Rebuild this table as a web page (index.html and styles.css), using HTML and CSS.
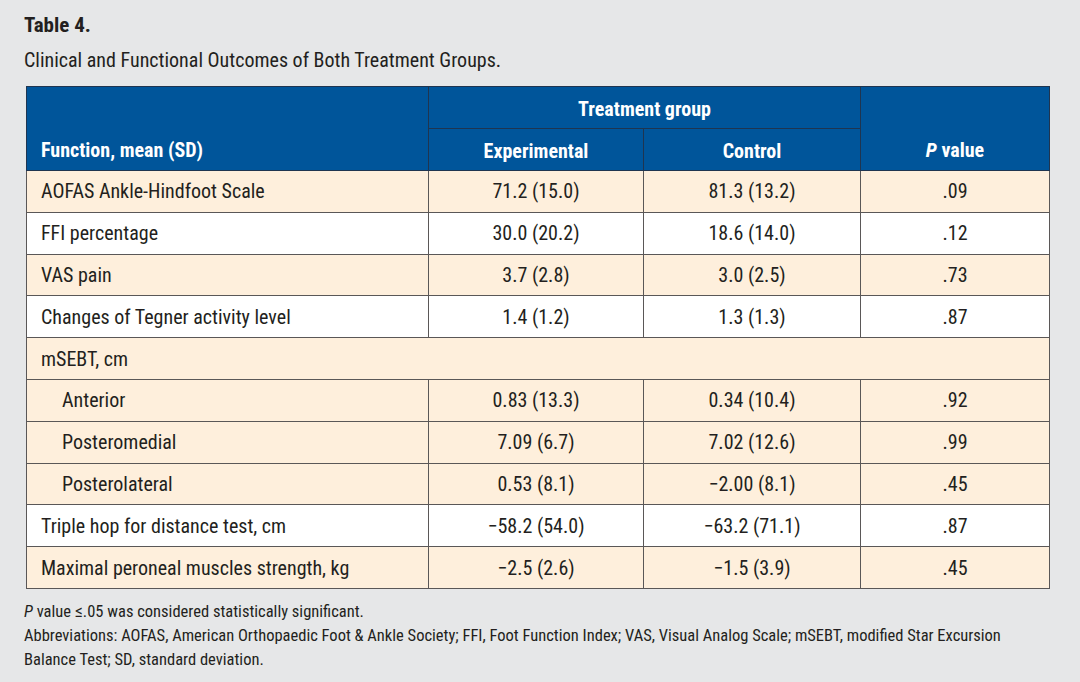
FILE: index.html
```html
<!DOCTYPE html>
<html lang="en">
<head>
<meta charset="utf-8">
<title>Table 4</title>
<link rel="stylesheet" href="styles.css">
</head>
<body>
<div class="page">
  <h1 class="label">Table 4.</h1>
  <p class="caption">Clinical and Functional Outcomes of Both Treatment Groups.</p>
  <table class="data">
    <colgroup>
      <col class="c1"><col class="c2"><col class="c3"><col class="c4">
    </colgroup>
    <thead>
      <tr class="h1">
        <th class="left low" rowspan="2">Function, mean (SD)</th>
        <th colspan="2" class="group">Treatment group</th>
        <th class="low" rowspan="2"><i>P</i> value</th>
      </tr>
      <tr class="h2">
        <th>Experimental</th>
        <th>Control</th>
      </tr>
    </thead>
    <tbody>
      <tr class="cream"><td class="left">AOFAS Ankle-Hindfoot Scale</td><td>71.2 (15.0)</td><td>81.3 (13.2)</td><td>.09</td></tr>
      <tr class="white"><td class="left">FFI percentage</td><td>30.0 (20.2)</td><td>18.6 (14.0)</td><td>.12</td></tr>
      <tr class="cream"><td class="left">VAS pain</td><td>3.7 (2.8)</td><td>3.0 (2.5)</td><td>.73</td></tr>
      <tr class="white"><td class="left">Changes of Tegner activity level</td><td>1.4 (1.2)</td><td>1.3 (1.3)</td><td>.87</td></tr>
      <tr class="cream"><td class="left" colspan="4">mSEBT, cm</td></tr>
      <tr class="cream"><td class="left sub">Anterior</td><td>0.83 (13.3)</td><td>0.34 (10.4)</td><td>.92</td></tr>
      <tr class="cream"><td class="left sub">Posteromedial</td><td>7.09 (6.7)</td><td>7.02 (12.6)</td><td>.99</td></tr>
      <tr class="cream"><td class="left sub">Posterolateral</td><td>0.53 (8.1)</td><td>&minus;2.00 (8.1)</td><td>.45</td></tr>
      <tr class="white"><td class="left">Triple hop for distance test, cm</td><td>&minus;58.2 (54.0)</td><td>&minus;63.2 (71.1)</td><td>.87</td></tr>
      <tr class="cream"><td class="left">Maximal peroneal muscles strength, kg</td><td>&minus;2.5 (2.6)</td><td>&minus;1.5 (3.9)</td><td>.45</td></tr>
    </tbody>
  </table>
  <div class="notes">
    <p><i>P</i> value <span class="le">&le;</span>.05 was considered statistically significant.</p>
    <p>Abbreviations: AOFAS, American Orthopaedic Foot &amp; Ankle Society; FFI, Foot Function Index; VAS, Visual Analog Scale; mSEBT, modified Star Excursion Balance Test; SD, standard deviation.</p>
  </div>
</div>
</body>
</html>
```

FILE: styles.css
```css
html, body {
  margin: 0;
  padding: 0;
  background: #e6e7e8;
}
body {
  font-family: "Liberation Sans Narrow", "Roboto Condensed", "DejaVu Sans Condensed", sans-serif;
  color: #231f20;
}
.page {
  width: 1080px;
  height: 682px;
  padding: 12px 0 0 24px;
  box-sizing: border-box;
}
.label {
  margin: 0;
  font-size: 21px;
  line-height: 26px;
  font-weight: bold;
}
.caption {
  margin: 10px 0 0;
  font-size: 20px;
  line-height: 24px;
}
.data {
  margin: 14px 0 0 2px;
  border-collapse: collapse;
  width: 1023px;
  table-layout: fixed;
  font-size: 20px;
}
.c1 { width: 402px; }
.c2 { width: 215px; }
.c3 { width: 217px; }
.c4 { width: 189px; }
.data th, .data td {
  height: 41.8px;
  padding: 0;
  text-align: center;
  vertical-align: middle;
  box-sizing: border-box;
}
.data thead th {
  background: #00559a;
  color: #ffffff;
  font-weight: bold;
  border: 1px solid #1f3550;
  padding-top: 2px;
}
.data thead .h1 th { height: 42px; }
.data thead .h2 th { height: 42px; }
.data thead th.low {
  vertical-align: bottom;
  padding-bottom: 8px;
}
.data thead th.left, .data td.left {
  text-align: left;
  padding-left: 14px;
}
.data td {
  border: 1px solid #5a5757;
}
.data td.sub { padding-left: 35px; }
.cream td { background: #feefdc; }
.white td { background: #ffffff; }
.notes {
  margin-top: 10px;
  font-size: 16.5px;
  line-height: 24px;
  width: 1010px;
}
.notes p { margin: 0; }
.le { font-size: 18px; }
```
